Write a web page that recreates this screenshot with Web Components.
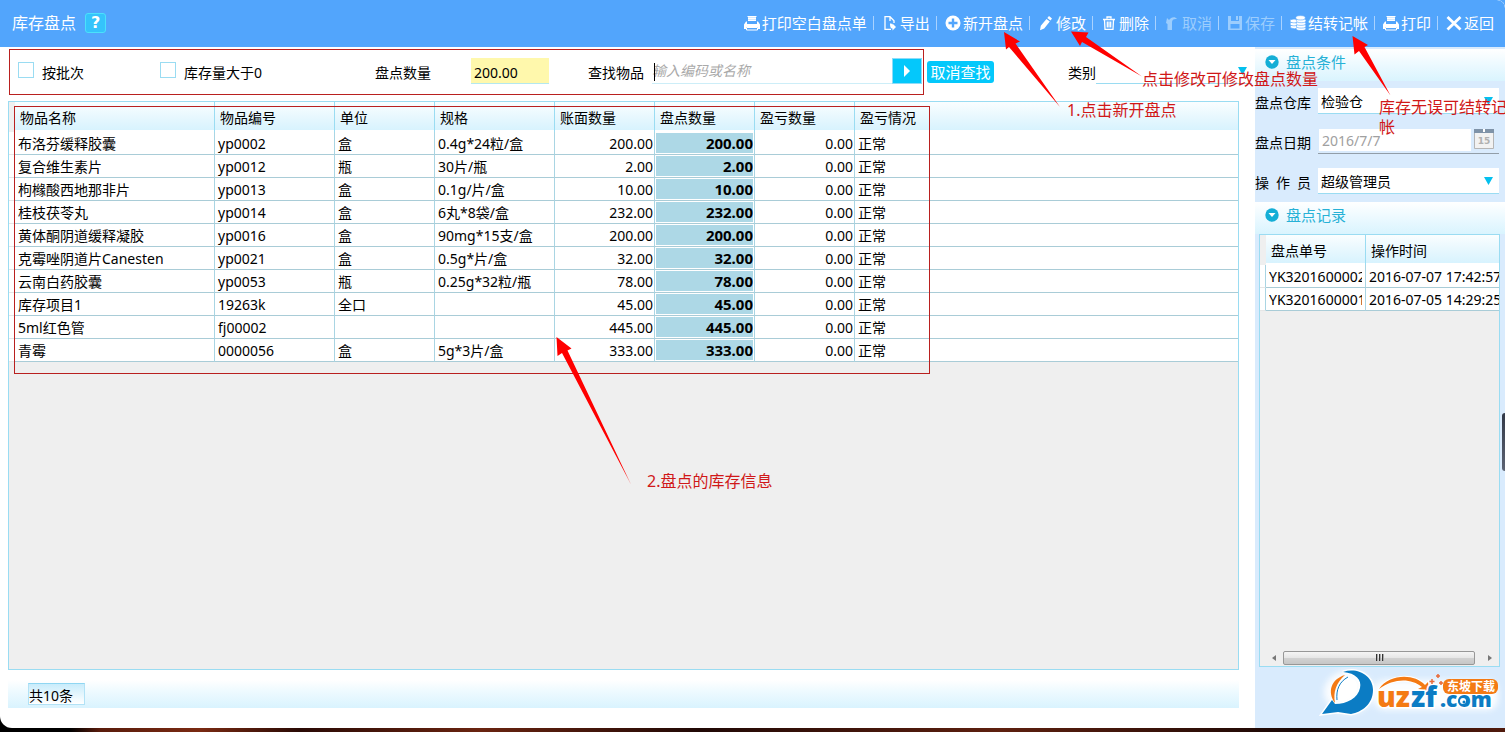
<!DOCTYPE html>
<html lang="zh-CN">
<head>
<meta charset="utf-8">
<meta name="viewport" content="width=device-width, initial-scale=1">
<title>库存盘点</title>
<style>
  html { background: #000; }
  body { margin: 0; font: 14px/20px "Noto Sans", "Noto Sans CJK SC", sans-serif; color: #000; overflow: hidden; }
</style>
</head>
<body>
<stock-app></stock-app>

<script>
const ICONS = {
  print: '<path d="M4 1h8v5H4z" fill="currentColor" opacity=".75"/><path d="M3.500 1h9v1H3.500zM4 3h8v1H4zM4 5h8v1H4zM2 6.500h1V9h10V6.500h1l2 3V14h-2v-2H2v2H0V9.500z" fill="currentColor"/><path d="M2.500 12.500h11V15h-11z" fill="none" stroke="currentColor"/>',
  export: '<path d="M9 14.300H3V1.700h5l4 4V8M8 2v4" fill="none" stroke="currentColor" stroke-width="1.300"/><path d="M8 8.500c2 0 2.500.5 2.500 2V8.500l3.500 3.500-3.500 3.500v-2c-1.500 0-2.500-1-2.500-5z" fill="currentColor"/>',
  add: '<circle cx="8" cy="8" r="7.500" fill="currentColor"/><path d="M8 3.500v9M3.500 8h9" stroke="#52a5fc" stroke-width="2.400"/>',
  edit: '<path d="M11 1l3 2.500-1.500 2L9.300 3zM8.500 4l3.300 2.500-5.600 7-4.200 1.700.8-4.500z" fill="currentColor"/>',
  trash: '<path d="M2 4.500h12M6 3.500V2h4v1.500M3.500 5l.5 9.300h8l.5-9.300M6.300 6.500v6M8 6.500v6M9.700 6.500v6" fill="none" stroke="currentColor" stroke-width="1.300"/>',
  undo: '<path d="M3 3l2 2c2-3 6-4 8-1-3-.5-5 .5-5 3.500V15H3.500V9L2 8z" fill="currentColor"/>',
  save: '<path d="M1 1h3v5h8V1h3v14H1zM3.500 9v4.500h9V9z" fill="currentColor" fill-rule="evenodd"/><path d="M9 1h2v4H9z" fill="currentColor"/>',
  coins: '<g fill="currentColor" stroke="#52a5fc" stroke-width=".6"><ellipse cx="4.500" cy="11.800" rx="4.200" ry="1.900"/><ellipse cx="4" cy="9" rx="4" ry="1.900"/><ellipse cx="4" cy="6" rx="4" ry="1.900"/><ellipse cx="11" cy="13.500" rx="4.800" ry="2.100"/><ellipse cx="11.200" cy="11" rx="4.800" ry="2.100"/><ellipse cx="11" cy="8.300" rx="4.800" ry="2.100"/><ellipse cx="11.200" cy="5.600" rx="4.800" ry="2.100"/><ellipse cx="10.500" cy="2.800" rx="4.800" ry="2.200"/></g>',
  close: '<path d="M1.500 2l13 12.500M14.500 2l-13 12.500" stroke="currentColor" stroke-width="2.800"/>'
};

function define(name, markup, setup) {
  customElements.define(name, class extends HTMLElement {
    constructor() {
      super();
      const root = this.attachShadow({ mode: 'open' });
      const t = document.createElement('template');
      t.innerHTML = '<style>*{box-sizing:border-box}</style>' +
        (typeof markup === 'function' ? markup(this) : markup);
      root.append(t.content);
    }
    connectedCallback() { if (setup) setup(this, this.shadowRoot); }
  });
}

/* toolbar button with a leading icon */
define('tool-button', `
  <style>
    :host { display: block; flex: none; }
    button { display: flex; align-items: center; gap: 2px; height: 20px; padding: 0 6px 0 8px; border: 0;
      background: none; color: #fff; font: inherit; font-size: 15px; line-height: 20px; white-space: nowrap; cursor: pointer;
      position: relative; }
    :host(:not([first])) button { padding-left: 9px; }
    :host(:not([first])) button::before { content: ""; position: absolute; left: 0; top: 3px; height: 14px; width: 1px; background: #a9d2ff; }
    button:disabled { color: #9ccdfd; cursor: default; }
    svg { width: 16px; height: 16px; flex: none; }
  </style>
  <button type="button"><svg viewBox="0 0 16 16" aria-hidden="true"></svg><slot></slot></button>`,
  (host, root) => {
    root.querySelector('svg').innerHTML = ICONS[host.getAttribute('icon')];
    root.querySelector('button').disabled = host.hasAttribute('disabled');
  });

define('app-header', `
  <style>
    :host { display: flex; align-items: center; height: 47px; padding: 0 5px 2px 12px; background: #52a5fc; color: #fff;
      border-radius: 0 8px 0 0; }
    h1 { margin: 0; font-size: 16px; font-weight: 400; line-height: 24px; }
    .help { width: 21px; height: 20px; margin-left: 9px; padding: 0; border: 1px solid #4be1fb; border-radius: 3px;
      background: #35c3fb; color: #fff; font: bold 16px/16px "DejaVu Sans", sans-serif; }
    nav { display: flex; margin-left: auto; }
  </style>
  <h1>库存盘点</h1>
  <button class="help" type="button">?</button>
  <nav>
    <tool-button icon="print" first>打印空白盘点单</tool-button>
    <tool-button icon="export">导出</tool-button>
    <tool-button icon="add">新开盘点</tool-button>
    <tool-button icon="edit">修改</tool-button>
    <tool-button icon="trash">删除</tool-button>
    <tool-button icon="undo" disabled>取消</tool-button>
    <tool-button icon="save" disabled>保存</tool-button>
    <tool-button icon="coins">结转记帐</tool-button>
    <tool-button icon="print">打印</tool-button>
    <tool-button icon="close">返回</tool-button>
  </nav>`);

define('filter-bar', `
  <style>
    :host { display: grid; grid-template-columns: 142px 215px 213px 339px 141px 1fr; height: 54px;
      padding: 11px 3px 0 18px; align-items: start; }
    label, .cell { display: flex; height: 26px; align-items: center; white-space: nowrap; }
    label span { padding-top: 3px; }
    input, select, button { font: inherit; color: #000; border: 0; border-radius: 0; margin: 0; outline: 0; }
    input[type=checkbox] { appearance: none; width: 16px; height: 16px; border: 1px solid #9adcf2; background: #fff; margin: 0 8px 2px 0; }
    .qty { width: 78px; height: 26px; margin-left: 40px; padding: 3px 3px 0; background: #fff8ac; border-bottom: 1px solid #b4e8ee; }
    .find { width: 240px; height: 26px; margin-left: 8px; padding: 0; background: none; border-bottom: 1px solid #cdeef8; }
    .find::placeholder { color: #a9a9a9; font-style: italic; opacity: 1; }
    .wrap { position: relative; display: flex; }
    .caret { position: absolute; left: 10px; top: 5px; width: 1px; height: 18px; background: #000; }
    .go { width: 30px; height: 26px; padding: 0; background: #04c8fb; border: 1px solid #8ddcf8; }
    .go svg { display: block; margin: auto; width: 8px; height: 12px; }
    .cancel { width: 67px; height: 22px; margin-top: 3px; padding: 0; border-radius: 3px; background: #04c8fb; color: #fff; font-size: 15px; line-height: 20px; }
    .type { flex: 1; position: relative; height: 26px; }
    select { appearance: none; width: 100%; height: 26px; background: none; border-bottom: 1px solid #9adcf2; }
    .type svg { position: absolute; right: 5px; top: 9px; width: 9px; height: 9px; }
  </style>
  <label><input type="checkbox"><span>按批次</span></label>
  <label><input type="checkbox"><span>库存量大于0</span></label>
  <label><span>盘点数量</span><input class="qty" type="text" value="200.00"></label>
  <div class="cell"><label for="find"><span>查找物品</span></label>
    <div class="wrap"><input class="find" id="find" type="text" placeholder="输入编码或名称"><i class="caret"></i></div>
    <button class="go" type="button" aria-label="查找"><svg viewBox="0 0 8 12"><path d="M1 0l6 6-6 6z" fill="#fff"/></svg></button></div>
  <button class="cancel" type="button">取消查找</button>
  <label><span>类别</span><div class="type"><select><option></option></select>
    <svg viewBox="0 0 9 9"><path d="M0 0h9L4.500 8z" fill="#04c0ee"/></svg></div></label>`);

/* grid styles shared by both data tables */
const GRID_CSS = `
  table { border-collapse: separate; border-spacing: 0; table-layout: fixed; width: 100%; }
  th, td { padding: 0; text-align: left; white-space: nowrap; overflow: hidden; border-right: 1px solid #a9d5e3; }
  th { height: 30px; padding: 2px 0 0 5px; font-weight: 400; border-color: #9adcf2;
    background: linear-gradient(#fafeff, #e9f8fe 45%, #d8f3fe 92%, #fff 93%); }
  td { height: 23px; padding: 1px 1px 0 3px; line-height: 21px; background: #fff; border-bottom: 1px solid #a9ccd7; }
  th:last-child, td:last-child { border-right: 0; }
  th.mark { background: #efefef; border-right: 0; padding: 0; } td.mark { padding: 0; border-bottom-color: #e6e6e6; background: #fff; }`;

const ITEMS = [
  ['布洛芬缓释胶囊','yp0002','盒','0.4g*24粒/盒','200.00'],
  ['复合维生素片','yp0012','瓶','30片/瓶','2.00'],
  ['枸橼酸西地那非片','yp0013','盒','0.1g/片/盒','10.00'],
  ['桂枝茯苓丸','yp0014','盒','6丸*8袋/盒','232.00'],
  ['黄体酮阴道缓释凝胶','yp0016','盒','90mg*15支/盒','200.00'],
  ['克霉唑阴道片Canesten','yp0021','盒','0.5g*片/盒','32.00'],
  ['云南白药胶囊','yp0053','瓶','0.25g*32粒/瓶','78.00'],
  ['库存项目1','19263k','全口','','45.00'],
  ['5ml红色管','fj00002','','','445.00'],
  ['青霉','0000056','盒','5g*3片/盒','333.00']
];

define('stock-table', () => `
  <style>
    :host { display: block; background: #efefef; border: 1px solid #9adcf2; overflow: hidden; }
    ${GRID_CSS}
    .num { text-align: right; }
    td.count { font-size: 15px; font-weight: 700; background: #add8e6; box-shadow: inset 0 0 0 1px #fff; }
  </style>
  <table>
    <colgroup><col style="width:6px"><col style="width:200px"><col style="width:120px"><col style="width:100px"><col style="width:120px"><col style="width:100px"><col style="width:100px"><col style="width:100px"><col></colgroup>
    <thead><tr><th class="mark"></th>${['物品名称','物品编号','单位','规格','账面数量','盘点数量','盈亏数量','盈亏情况'].map(h => `<th scope="col">${h}</th>`).join('')}</tr></thead>
    <tbody>${ITEMS.map(([n, c, u, s, q]) => `<tr><td class="mark"></td><td>${n}</td><td>${c}</td><td>${u}</td><td>${s}</td><td class="num">${q}</td><td class="num count">${q}</td><td class="num">0.00</td><td>正常</td></tr>`).join('')}</tbody>
  </table>`);

define('record-table', () => `
  <style>
    :host { display: flex; flex-direction: column; background: #efefef; border: 1px solid #9adcf2; overflow: hidden; }
    ${GRID_CSS}
    .view { flex: 1; overflow: hidden; }
    table { width: 306px; }
    td span { display: block; overflow: hidden; margin-right: 2px; }
    .bar { display: flex; align-items: center; height: 17px; margin: 0 1px 0 6px; }
    .bar svg { width: 17px; height: 16px; flex: none; }
    .bar svg:last-child { width: 23px; }
    .thumb { flex: 1; height: 14px; border: 1px solid #979797; border-radius: 2px; background: linear-gradient(#f5f5f5, #e6e6e6 49%, #d2d2d2 50%, #c6c6c6);
      display: flex; align-items: center; justify-content: center; gap: 2px; }
    .thumb i { width: 1px; height: 7px; background: #333; box-shadow: 1px 0 #aaa; }
  </style>
  <div class="view"><table>
    <colgroup><col style="width:6px"><col style="width:100px"><col style="width:200px"></colgroup>
    <thead><tr><th class="mark"></th><th scope="col">盘点单号</th><th scope="col">操作时间</th></tr></thead>
    <tbody>
      <tr><td class="mark"></td><td><span>YK3201600002</span></td><td>2016-07-07 17:42:57</td></tr>
      <tr><td class="mark"></td><td><span>YK3201600001</span></td><td>2016-07-05 14:29:25</td></tr>
    </tbody></table></div>
  <div class="bar">
    <svg viewBox="0 0 17 16"><path d="M10 5v6L6 8z" fill="#777"/></svg>
    <div class="thumb"><i></i><i></i><i></i></div>
    <svg viewBox="0 0 23 16"><path d="M13 5v6l4-3z" fill="#777"/></svg>
  </div>`);

define('section-title', `
  <style>
    :host { display: block; background: linear-gradient(#fff, #e8f8ff 60%, #d9f4fe); }
    h2 { display: flex; align-items: center; gap: 7px; height: 32px; margin: 0; padding: 0 0 6px 10px; font-size: 15px; line-height: 20px; font-weight: 400; color: #27b1d6; }
    svg { width: 14px; height: 14px; }
  </style>
  <h2><svg viewBox="0 0 14 14" aria-hidden="true"><circle cx="7" cy="7" r="6.700" fill="#14aed6"/><path d="M3.500 5h7L7 9z" fill="#fff"/></svg><slot></slot></h2>`);

define('site-logo', `
  <style>:host { display: block; } svg { display: block; width: 187px; height: 60px; margin-left: auto; }
    text { font-family: "Open Sans", sans-serif; font-weight: 800; }
    .tag { font-family: "Noto Sans CJK SC", sans-serif; font-weight: 700; }</style>
  <svg viewBox="1318 667 187 60" role="img" aria-label="uzzf.com 东坡下载">
    <defs><filter id="glow" x="-20%" y="-30%" width="140%" height="160%"><feGaussianBlur stdDeviation="3"/></filter></defs>
    <g filter="url(#glow)" fill="#fff" opacity=".9"><ellipse cx="1349" cy="692" rx="25" ry="21"/><rect x="1374" y="680" width="124" height="30" rx="10"/></g>
    <path d="M1343 672C1358 667 1373 676 1373 690C1373 704 1362 712 1351 714L1338 712 1322 714 1332 700 1335 704C1347 704 1358 698 1360 688C1362 680 1356 673 1343 672z" fill="#0b7cc4" stroke="#fff" stroke-width="3" paint-order="stroke"/>
    <path d="M1344 677c11 0 14 6 13 12-2 8-9 12-18 12-4-8-3-17 5-24z" fill="#fff"/>
    <path d="M1345 675C1331 679 1327 692 1335 703C1333 692 1336 683 1345 675z" fill="#f47a14"/>
    <path d="M1348 677c-9 5-12 13-11 23" fill="none" stroke="#0b7cc4"/>
    <path d="M1379 689C1389 674 1414 673 1425 685L1428 682 1429 691 1418 689 1422 687C1411 678 1394 678 1379 689z" fill="#f47a14" stroke="#fff" stroke-width="2" paint-order="stroke"/>
    <g stroke="#fff" stroke-width="3" paint-order="stroke"><text x="1377" y="707" font-size="28" fill="#f47a14">uz</text><text x="1411" y="707" font-size="28" fill="#0b7cc4">zf</text><text x="1440" y="707" font-size="21" fill="#0b7cc4">.com</text></g>
    <rect x="1443" y="679" width="55" height="15" rx="6" fill="#f47a14"/>
    <text class="tag" x="1447" y="691" font-size="12" fill="#fff">东坡下载</text>
    <circle cx="1463" cy="701" r="5" fill="#0b7cc4"/><circle cx="1463" cy="701" r="3" fill="#fff"/><circle cx="1464" cy="702" r="1.500" fill="#0b7cc4"/>
    <path d="M1432 679v5M1429.500 681.500h5M1438 674v4M1436 676h4M1441 681v4M1439 683h4" stroke="#e86b3a" stroke-width="1.500"/>
  </svg>`);

define('side-panel', `
  <style>
    :host { display: flex; flex-direction: column; width: 250px; flex: none; padding-top: 2px; background: #d9ebfd; position: relative; }
    form { display: grid; grid-template-columns: minmax(0, 1fr); gap: 14px; padding: 7px 6px 8px 0; }
    label { display: grid; grid-template-columns: 56px minmax(0, 1fr); column-gap: 7px; height: 26px; align-items: center; }
    label > span { padding-top: 3px; text-align-last: justify; white-space: nowrap; }
    .box { position: relative; height: 26px; display: flex; min-width: 0; }
    select, input { font: inherit; color: #000; border: 0; border-radius: 0; margin: 0; flex: 1; min-width: 0; height: 26px; }
    select { appearance: none; background: #fff; border-bottom: 1px solid #9adcf2; padding: 3px 3px 0; }
    .box svg.arrow { position: absolute; right: 6px; top: 9px; width: 9px; height: 9px; }
    .date { border-bottom: 1px solid #929ea8; }
    input { padding: 0 3px; height: 22px; margin: 1px 3px 0 1px; }
    input:disabled { background: #fff; color: #a0a0a0; }
    .date svg { width: 20px; height: 20px; margin: 1px 5px 0 0; flex: none; }
    record-table { flex: 1; margin: 0 5px 0 4px; }
    site-logo { height: 61px; }
    .tab { position: absolute; right: 0; top: 366px; width: 3px; height: 58px; border-radius: 3px 0 0 3px; background: linear-gradient(#333948, #5c6373); }
  </style>
  <section-title>盘点条件</section-title>
  <form>
    <label><span>盘点仓库</span><div class="box"><select><option>检验仓</option></select><svg class="arrow" viewBox="0 0 9 9"><path d="M0 0h9L4.500 8z" fill="#04c0ee"/></svg></div></label>
    <label><span>盘点日期</span><div class="box date"><input type="text" value="2016/7/7" disabled>
      <svg viewBox="0 0 20 20"><path d="M.5.500h19v19H.5z" fill="#f2f2f2" stroke="#b5b5b5"/><path d="M0 0h20v4H0z" fill="#7f93a8"/><path d="M9 0h2v3H9z" fill="#fff"/><text x="10" y="15" text-anchor="middle" font-family="DejaVu Sans" font-size="9" font-weight="bold" fill="#b0b0b0">15</text></svg></div></label>
    <label><span>操 作 员</span><div class="box"><select><option>超级管理员</option></select><svg class="arrow" viewBox="0 0 9 9"><path d="M0 0h9L4.500 8z" fill="#04c0ee"/></svg></div></label>
  </form>
  <section-title>盘点记录</section-title>
  <record-table></record-table>
  <site-logo></site-logo>
  <i class="tab"></i>`);

define('status-bar', `
  <style>
    :host { display: flex; align-items: center; height: 28px; padding-left: 20px; background: linear-gradient(#fff, #eefaff 40%, #d9f3fe); }
    output { width: 57px; height: 22px; padding: 2px 0 0; border: 1px solid #b2e2f6; border-top-color: #8fd6f2; background: linear-gradient(#c9ecfb, #fff); line-height: 20px; }
  </style>
  <output>共10条</output>`);

/* red tutorial marks floating over the window */
define('guide-notes', `
  <style>
    :host { position: absolute; inset: 0; overflow: hidden; pointer-events: none; color: #d01818; font-size: 16px; }
    svg { position: absolute; left: 0; top: 0; width: 1505px; height: 732px; }
    .frame { position: absolute; border: 1px solid #b9201f; }
    p { position: absolute; margin: 0; line-height: 20px; white-space: nowrap; }
  </style>
  <div class="frame" style="left:9px;top:49px;width:915px;height:46px"></div>
  <div class="frame" style="left:14px;top:106px;width:916px;height:268px"></div>
  <svg viewBox="0 0 1505 732" fill="#f00" aria-hidden="true">
    <path d="M1004 32l16 9.500-4.500 2L1060 107l-51-60-3 2.500z"/>
    <path d="M1071 31.500l17.500 1-2.500 4.500 56 39.500L1082 42l-2 4z"/>
    <path d="M1352.500 36l15.500 9-3.500 2 26 48.500L1359 51l-4.500 3.500z"/>
    <path d="M556.500 337l15 11.500-4 2L631 484.500 562 353l-4.500 3z"/>
  </svg>
  <p style="left:1067px;top:100px">1.点击新开盘点</p>
  <p style="left:1142px;top:69px">点击修改可修改盘点数量</p>
  <p style="left:1379px;top:97px">库存无误可结转记<br>帐</p>
  <p style="left:647px;top:471px">2.盘点的库存信息</p>`);

define('stock-app', `
  <style>
    :host { display: flex; flex-direction: column; min-height: 100vh; position: relative; padding-bottom: 4px; box-sizing: border-box;
      background: linear-gradient(90deg, #000 70px, #5a1c0c 100px, #7a2a12 200px, #2a0a05 300px, #6a2410 480px, #200805 700px, #5e200f 1000px, #180604 1300px, #501a0c) bottom / 100% 16px no-repeat #52a5fc; }
    .window { flex: 1; display: flex; flex-direction: column; background: #fff; border-radius: 0 8px 0 12px; overflow: hidden; }
    .body { flex: 1; display: flex; }
    main { flex: 1; min-width: 0; display: flex; flex-direction: column; padding-bottom: 20px; }
    stock-table { flex: 1; margin: 0 16px 10px 8px; }
    status-bar { margin: 0 16px 0 8px; }
  </style>
  <div class="window">
    <app-header></app-header>
    <div class="body">
      <main><filter-bar></filter-bar><stock-table></stock-table><status-bar></status-bar></main>
      <side-panel></side-panel>
    </div>
  </div>
  <guide-notes></guide-notes>`);
</script>
</body>
</html>
